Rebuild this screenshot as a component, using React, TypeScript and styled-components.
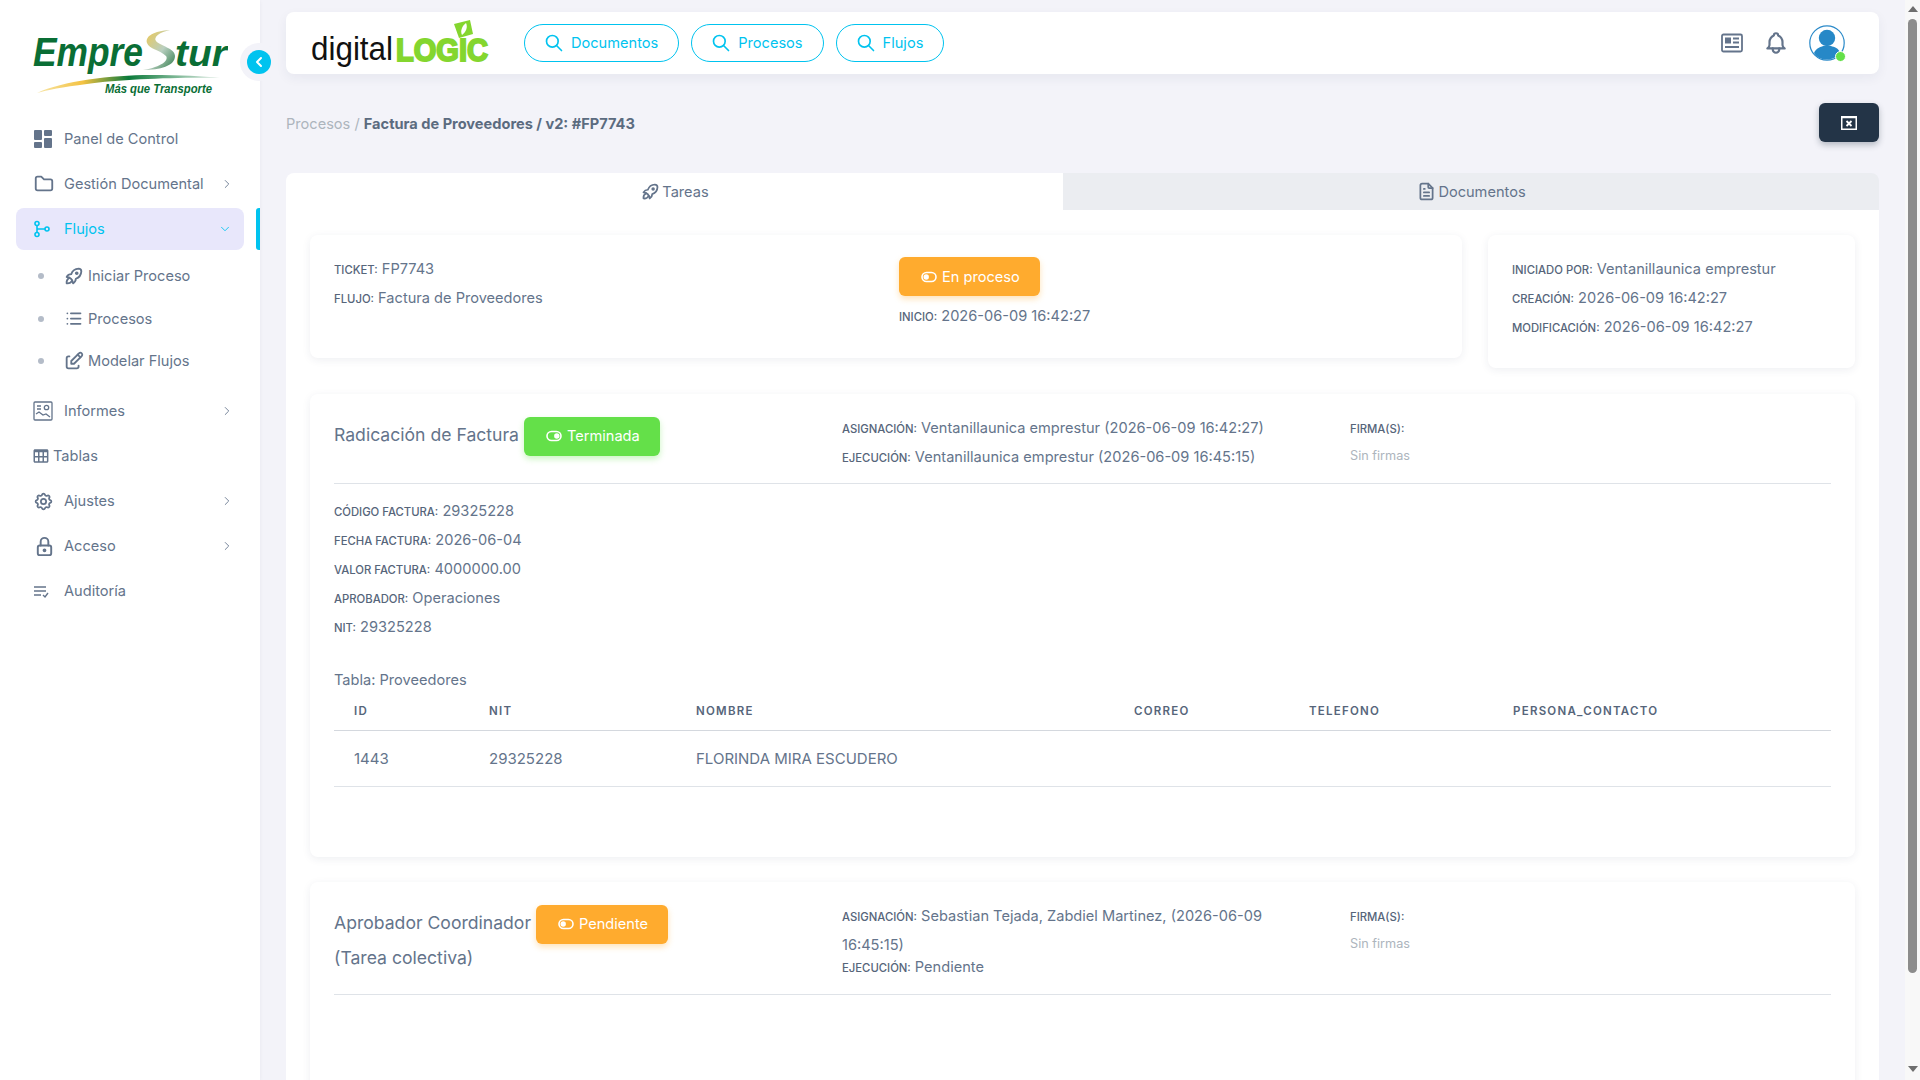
import React from "react";
import styled, { createGlobalStyle } from "styled-components";
import { ChevronLeft, ChevronRight, ChevronDown } from "lucide-react";
import { TbRocket, TbLock, TbSettings, TbFolder, TbList, TbEdit, TbSearch, TbBell, TbFileText } from "react-icons/tb";
import { BiTable } from "react-icons/bi";

const GlobalStyle = createGlobalStyle`
  html, body { margin: 0; padding: 0; height: 1080px; overflow: hidden; background: #f3f3f9; }
  body { font-family: Inter, "Noto Sans", sans-serif; color: #64748b; }
  * { box-sizing: border-box; }
`;

const Page = styled.div`display: flex; width: 1920px; height: 1080px; overflow: hidden;`;

const Sidebar = styled.aside`
  position: relative; flex: 0 0 260px; background: #fff; height: 1080px; padding: 0 16px;
  box-shadow: 0 1px 4px rgba(20, 30, 60, .05);
`;
const LogoWrap = styled.div`height: 116px; padding-top: 26px; padding-left: 16px;`;
const CollapseHalo = styled.div`
  position: absolute; left: 240px; top: 43px; width: 38px; height: 38px; border-radius: 50%;
  background: #f3f3f9; display: flex; align-items: center; justify-content: center;
`;
const CollapseBtn = styled.div`
  width: 24px; height: 24px; border-radius: 50%; background: #00c3ef; color: #fff;
  display: flex; align-items: center; justify-content: center;
`;
const NavRow = styled.div<{ $active?: boolean; $h?: number }>`
  position: relative; display: flex; align-items: center; height: ${p => p.$h ?? 45}px; padding: 0 ${p => (p.$active ? 12 : 10)}px 0 18px;
  font-size: 14.6px; line-height: 20px; color: ${p => (p.$active ? "#00c3ef" : "#64748b")};
  background: ${p => (p.$active ? "#e8e7fb" : "transparent")}; border-radius: 8px;
`;
const NavIconBox = styled.span`width: 30px; flex: 0 0 30px; display: flex; align-items: center; margin-left: -1px; margin-right: 1px; color: #64748b;`;
const TableIconBox = styled.span`display: flex; align-items: center; margin: 0 3px 0 -2px; color: #64748b;`;
const NavLabel = styled.span`flex: 1;`;
const ActiveMark = styled.span`
  position: absolute; right: -16px; top: 0; width: 4px; height: 42px; background: #00c3ef;
  border-radius: 3px 0 0 3px;
`;
const SubRow = styled.div`
  display: flex; align-items: center; height: 42.5px; padding-left: 22px; font-size: 14.6px; color: #64748b;
`;
const Dot = styled.span`width: 6px; height: 6px; border-radius: 50%; background: #b4bcc8; margin-right: 19px;`;
const SubIcon = styled.span`display: flex; width: 25px; flex: 0 0 25px;`;
const Spacer = styled.div<{ $h: number }>`height: ${p => p.$h}px;`;

const Main = styled.main`flex: 1; min-width: 0; padding: 12px 26px 0 26px; height: 1080px; overflow: hidden;`;
const Topbar = styled.header`
  display: flex; align-items: center; height: 62px; background: #fff; border-radius: 8px; padding: 0 24px;
  box-shadow: 0 4px 12px rgba(40, 50, 90, .06);
`;
const PillGroup = styled.div`display: flex; gap: 12px; margin-left: 34px;`;
const Pill = styled.div`
  display: flex; align-items: center; gap: 7px; height: 38px; padding: 0 20px 0 19px; border: 1px solid #00c3ef;
  border-radius: 19px; color: #00c3ef; font-size: 14.6px;
`;
const TopRight = styled.div`margin-left: auto; display: flex; align-items: center; gap: 20px; padding-right: 10px;`;
const AvatarWrap = styled.div`position: relative; width: 36px; height: 36px;`;
const OnlineDot = styled.span`
  position: absolute; right: -1px; bottom: -1px; width: 11px; height: 11px; border-radius: 50%;
  background: #64e049; border: 1.5px solid #fff;
`;

const CrumbBar = styled.div`display: flex; align-items: center; justify-content: space-between; height: 39px; margin-top: 29px;`;
const Crumb = styled.div`font-size: 14.6px; color: #adb5bd; font-weight: 400; padding-top: 2px;`;
const CrumbStrong = styled.span`font-weight: 700; color: #5b6b80;`;
const DarkBtn = styled.div`
  width: 60px; height: 39px; border-radius: 6px; background: #233447; color: #fff;
  display: flex; align-items: center; justify-content: center; box-shadow: 0 3px 6px rgba(35, 52, 71, .3);
`;

const Tabs = styled.div`display: flex; margin-top: 31px; height: 37px; border-radius: 8px 8px 0 0; overflow: hidden;`;
const Tab = styled.div<{ $active?: boolean }>`
  flex: ${p => (p.$active ? "0 0 777px" : "1")}; display: flex; align-items: center; justify-content: center; gap: 1px;
  font-size: 14.6px; color: #64748b; background: ${p => (p.$active ? "#fff" : "#ebedf1")};
`;
const Panel = styled.section`background: #fff; padding: 25px 24px 0; height: 900px;`;
const TopCards = styled.div`display: flex; gap: 26px; align-items: flex-start;`;
const Card = styled.div<{ $w?: string; $h: number; $mt?: number }>`
  flex: ${p => p.$w ?? "1"}; height: ${p => p.$h}px; background: #fff; border-radius: 8px; padding: 20px 24px;
  margin-top: ${p => p.$mt ?? 0}px; box-shadow: 0 2px 8px rgba(40, 50, 90, .08);
`;
const InfoSplit = styled.div`display: flex;`;
const InfoCol = styled.div<{ $w?: number }>`flex: ${p => (p.$w ? `0 0 ${p.$w}px` : "1")}; min-width: 0;`;
const StatusCol = styled(InfoCol)`padding-top: 2px;`;
const Line = styled.div<{ $lh?: number }>`font-size: 14.6px; line-height: ${p => p.$lh ?? 29}px; color: #64748b; white-space: nowrap;`;
const StatusLine = styled(Line)`margin-top: 6px;`;
const WrapLine = styled(Line)`white-space: normal; width: 430px;`;
const Key = styled.span`font-size: 11.3px; line-height: 1; font-weight: 500; text-transform: uppercase; color: #56657a;`;

const Badge = styled.div<{ $c: string }>`
  display: inline-flex; align-items: center; gap: 5px; height: 39px; padding: 0 20px 0 22px; border-radius: 6px;
  font-size: 14.6px; line-height: 20px; color: #fff; background: ${p => p.$c}; box-shadow: 0 3px 6px ${p => p.$c}55;
`;
const TitleBadge = styled(Badge)`vertical-align: middle; margin: -3px 0;`;
const TaskHead = styled.div<{ $h: number }>`display: flex; height: ${p => p.$h}px; border-bottom: 1px solid #dfe3e8;`;
const TaskTitle = styled.div`flex: 0 0 508px; font-size: 17.6px; line-height: 34px; color: #64748b; padding-top: 4px;`;
const TaskCol = styled.div`flex: 0 0 508px;`;
const SignCol = styled.div`flex: 1;`;
const Faint = styled.div`font-size: 12.7px; line-height: 25px; color: #adb5bd;`;
const Fields = styled.div`padding-top: 13px;`;
const TableName = styled.div`font-size: 14.6px; line-height: 22px; margin-top: 27px; color: #64748b;`;
const DataTable = styled.div`display: grid; grid-template-columns: 135px 207px 438px 175px 204px 1fr;`;
const Th = styled.div`
  font-size: 11.5px; font-weight: 600; letter-spacing: 1.25px; color: #56657a; padding: 0 20px; height: 40px;
  display: flex; align-items: center; border-bottom: 1.5px solid #d4d8de;
`;
const Td = styled.div`
  font-size: 15px; color: #64748b; padding: 0 20px; height: 56px; display: flex; align-items: center;
  border-bottom: 1px solid #dfe3e8;
`;

const Scrollbar = styled.div`
  flex: 0 0 15px; height: 1080px; background: #f8f8f8; display: flex; flex-direction: column; align-items: center;
  padding-top: 6px;
`;
const ArrowUp = styled.span`width: 0; height: 0; border: 5px solid transparent; border-top: 0; border-bottom: 6px solid #6e6e6e;`;
const ArrowDown = styled.span`width: 0; height: 0; border: 5px solid transparent; border-bottom: 0; border-top: 6px solid #6e6e6e; margin-top: 93px;`;
const Thumb = styled.div`width: 9px; height: 954px; border-radius: 5px; background: #8c8c8c; margin-top: 7px;`;

const Logo = () => (
  <svg width="196" height="72" viewBox="0 0 196 72">
    <defs>
      <linearGradient id="sw" x1="0" x2="1"><stop offset="0" stopColor="#f7e6a8" /><stop offset=".25" stopColor="#f4c242" /><stop offset=".5" stopColor="#0b7a3a" /><stop offset="1" stopColor="#e6efe9" /></linearGradient>
      <linearGradient id="sw2" x1="0" x2="1" y1="0" y2="1"><stop offset="0" stopColor="#f2c84b" /><stop offset=".55" stopColor="#b9cfc0" /><stop offset="1" stopColor="#2c7a48" /></linearGradient>
    </defs>
    <text x="1" y="40" fontFamily="Liberation Sans" fontStyle="italic" fontWeight="700" fontSize="40" fill="#0a6e35" textLength="110" lengthAdjust="spacingAndGlyphs">Empre</text>
    <text x="143" y="40" fontFamily="Liberation Sans" fontStyle="italic" fontWeight="700" fontSize="36" fill="#0a6e35" textLength="52" lengthAdjust="spacingAndGlyphs">tur</text>
    <path d="M138 4 C122 5 113 10 115 17 C117 23 128 24 134 30 C137 34 130 41 111 44 C128 44 143 40 143 30 C143 22 128 20 124 15 C121 11 128 6 138 4Z" fill="url(#sw2)" />
    <path d="M5 67 C30 55 80 49 118 49 C150 49 170 50 188 52 C150 51 90 53 55 58 C30 61 15 64 5 67Z" fill="url(#sw)" />
    <text x="73" y="67" fontFamily="Liberation Sans" fontStyle="italic" fontWeight="700" fontSize="12.5" fill="#0a6e35" textLength="107" lengthAdjust="spacingAndGlyphs">Más que Transporte</text>
  </svg>
);

const DigitalLogic = () => (
  <svg width="180" height="56" viewBox="0 0 180 56">
    <text x="1" y="45" fontFamily="Liberation Sans" fontSize="33" fill="#111" textLength="82" lengthAdjust="spacingAndGlyphs">digital</text>
    <text x="86" y="45.5" fontFamily="Liberation Sans" fontWeight="700" fontSize="31" fill="#84d62f" textLength="92" lengthAdjust="spacingAndGlyphs" stroke="#84d62f" strokeWidth="2">LOGIC</text>
    <path d="M144 9 L160 5 L163 19 L149 23Z" fill="#84d62f" />
    <path d="M152 20 C150 16 152 11 156 8 C158 12 156 17 152 20Z" fill="#fff" />
  </svg>
);

const Dash = () => (
  <svg width="20" height="20" viewBox="0 0 20 20" fill="#64748b"><rect x="1" y="1" width="8" height="10" rx="1"/><rect x="11" y="1" width="8" height="6" rx="1"/><rect x="1" y="13" width="8" height="6" rx="1"/><rect x="11" y="9" width="8" height="10" rx="1"/></svg>
);
const BranchIcon = () => (
  <svg width="18" height="18" viewBox="0 0 18 18" fill="none" stroke="#00c3ef" strokeWidth="1.6"><circle cx="4" cy="3.5" r="2"/><circle cx="4" cy="14.5" r="2"/><circle cx="14" cy="9" r="2"/><path d="M4 5.5V12.5M4 9H12"/></svg>
);
const ReportIcon = () => (
  <svg width="20" height="20" viewBox="0 0 20 20" fill="none" stroke="#64748b" strokeWidth="1.3"><rect x="1" y="1" width="18" height="18" rx="1"/><path d="M4 5h4M4 8h4"/><circle cx="13.5" cy="6.5" r="2.2"/><path d="M3 13l3-2 4 3 3-1 4 3"/></svg>
);
const Audit = () => (
  <svg width="16" height="16" viewBox="0 0 16 16" fill="none" stroke="#64748b" strokeWidth="1.4"><path d="M1 4h12M1 8h12M1 12h7M10 12l2 2 3-4"/></svg>
);
const News = () => (
  <svg width="22" height="20" viewBox="0 0 22 20" fill="none" stroke="#64748b" strokeWidth="1.8"><rect x="1" y="1.5" width="20" height="17" rx="1.5"/><rect x="4" y="4.5" width="6" height="6" fill="#64748b" stroke="none"/><path d="M12 5.5h6M12 9.5h6M4 14h14"/></svg>
);
const Avatar = () => (
  <svg width="36" height="36" viewBox="0 0 36 36"><circle cx="18" cy="18" r="17.2" fill="#fff" stroke="#2b8ac9" strokeWidth="1.2"/><circle cx="18" cy="13" r="8.2" fill="#2688c7"/><path d="M5 28 C7 23 12 22 14 21 H22 C25 22 30 23 31 28 C27 33 22 34.5 18 34.5 C13 34.5 8 33 5 28Z" fill="#2688c7"/></svg>
);
const CloseWin = () => (
  <svg width="16" height="14" viewBox="0 0 16 14" fill="none" stroke="#fff"><rect x=".75" y=".75" width="14.5" height="12.5" strokeWidth="1.5"/><path d="M5.5 5l5 5M10.5 5l-5 5" strokeWidth="1.8"/><path d="M1 1.5h14" strokeWidth="1.5"/></svg>
);
const StatusToggle = ({ on }: { on?: boolean }) => (
  <svg width="16" height="12" viewBox="0 0 16 12" fill="none"><rect x="1" y="1.5" width="14" height="9" rx="4.5" stroke="#fff" strokeWidth="1.6"/><circle cx={on ? 10.8 : 5.2} cy="6" r="2.7" fill="#fff"/></svg>
);

export default function App() {
  const c = "#64748b";
  return (
    <Page>
      <GlobalStyle />
      <Sidebar>
        <LogoWrap><Logo /></LogoWrap>
        <CollapseHalo><CollapseBtn><ChevronLeft size={16} strokeWidth={3} /></CollapseBtn></CollapseHalo>
        <NavRow><NavIconBox><Dash /></NavIconBox><NavLabel>Panel de Control</NavLabel></NavRow>
        <NavRow><NavIconBox><TbFolder size={22} /></NavIconBox><NavLabel>Gestión Documental</NavLabel><ChevronRight size={14} color={c} strokeWidth={1.5} /></NavRow>
        <Spacer $h={2} />
        <NavRow $active $h={42}><NavIconBox><BranchIcon /></NavIconBox><NavLabel>Flujos</NavLabel><ChevronDown size={14} color="#00c3ef" strokeWidth={1.5} /><ActiveMark /></NavRow>
        <Spacer $h={5} />
        <SubRow><Dot /><SubIcon><TbRocket size={22} color={c} /></SubIcon>Iniciar Proceso</SubRow>
        <SubRow><Dot /><SubIcon><TbList size={21} color={c} /></SubIcon>Procesos</SubRow>
        <SubRow><Dot /><SubIcon><TbEdit size={22} color={c} /></SubIcon>Modelar Flujos</SubRow>
        <Spacer $h={6} />
        <NavRow><NavIconBox><ReportIcon /></NavIconBox><NavLabel>Informes</NavLabel><ChevronRight size={14} color={c} strokeWidth={1.5} /></NavRow>
        <NavRow><TableIconBox><BiTable size={18} /></TableIconBox><NavLabel>Tablas</NavLabel></NavRow>
        <NavRow><NavIconBox><TbSettings size={21} /></NavIconBox><NavLabel>Ajustes</NavLabel><ChevronRight size={14} color={c} strokeWidth={1.5} /></NavRow>
        <NavRow><NavIconBox><TbLock size={23} /></NavIconBox><NavLabel>Acceso</NavLabel><ChevronRight size={14} color={c} strokeWidth={1.5} /></NavRow>
        <NavRow $h={44}><NavIconBox><Audit /></NavIconBox><NavLabel>Auditoría</NavLabel></NavRow>
      </Sidebar>
      <Main>
        <Topbar>
          <DigitalLogic />
          <PillGroup>
            <Pill><TbSearch size={20} />Documentos</Pill>
            <Pill><TbSearch size={20} />Procesos</Pill>
            <Pill><TbSearch size={20} />Flujos</Pill>
          </PillGroup>
          <TopRight>
            <News />
            <TbBell size={26} color={c} />
            <AvatarWrap><Avatar /><OnlineDot /></AvatarWrap>
          </TopRight>
        </Topbar>
        <CrumbBar>
          <Crumb>Procesos / <CrumbStrong>Factura de Proveedores / v2: #FP7743</CrumbStrong></Crumb>
          <DarkBtn><CloseWin /></DarkBtn>
        </CrumbBar>
        <Tabs>
          <Tab $active><TbRocket size={21} />Tareas</Tab>
          <Tab><TbFileText size={21} />Documentos</Tab>
        </Tabs>
        <Panel>
          <TopCards>
            <Card $h={123}>
              <InfoSplit>
                <InfoCol $w={565}>
                  <Line><Key>Ticket:</Key> FP7743</Line>
                  <Line><Key>Flujo:</Key> Factura de Proveedores</Line>
                </InfoCol>
                <StatusCol>
                  <Badge $c="#ffab2e"><StatusToggle />En proceso</Badge>
                  <StatusLine><Key>Inicio:</Key> 2026-06-09 16:42:27</StatusLine>
                </StatusCol>
              </InfoSplit>
            </Card>
            <Card $w="0 0 367px" $h={133}>
              <Line><Key>Iniciado por:</Key> Ventanillaunica emprestur</Line>
              <Line><Key>Creación:</Key> 2026-06-09 16:42:27</Line>
              <Line><Key>Modificación:</Key> 2026-06-09 16:42:27</Line>
            </Card>
          </TopCards>
          <Card $h={463} $mt={26}>
            <TaskHead $h={70}>
              <TaskTitle>Radicación de Factura <TitleBadge $c="#64e049"><StatusToggle on />Terminada</TitleBadge></TaskTitle>
              <TaskCol>
                <Line><Key>Asignación:</Key> Ventanillaunica emprestur (2026-06-09 16:42:27)</Line>
                <Line><Key>Ejecución:</Key> Ventanillaunica emprestur (2026-06-09 16:45:15)</Line>
              </TaskCol>
              <SignCol><Line><Key>Firma(s):</Key></Line><Faint>Sin firmas</Faint></SignCol>
            </TaskHead>
            <Fields>
              <Line><Key>Código factura:</Key> 29325228</Line>
              <Line><Key>Fecha factura:</Key> 2026-06-04</Line>
              <Line><Key>Valor factura:</Key> 4000000.00</Line>
              <Line><Key>Aprobador:</Key> Operaciones</Line>
              <Line><Key>Nit:</Key> 29325228</Line>
            </Fields>
            <TableName>Tabla: Proveedores</TableName>
            <DataTable>
              <Th>ID</Th><Th>NIT</Th><Th>NOMBRE</Th><Th>CORREO</Th><Th>TELEFONO</Th><Th>PERSONA_CONTACTO</Th>
              <Td>1443</Td><Td>29325228</Td><Td>FLORINDA MIRA ESCUDERO</Td><Td /><Td /><Td />
            </DataTable>
          </Card>
          <Card $h={300} $mt={25}>
            <TaskHead $h={93}>
              <TaskTitle>Aprobador Coordinador <TitleBadge $c="#ffab2e"><StatusToggle />Pendiente</TitleBadge><br />(Tarea colectiva)</TaskTitle>
              <TaskCol>
                <WrapLine><Key>Asignación:</Key> Sebastian Tejada, Zabdiel Martinez, (2026-06-09 16:45:15)</WrapLine>
                <Line $lh={15}><Key>Ejecución:</Key> Pendiente</Line>
              </TaskCol>
              <SignCol><Line><Key>Firma(s):</Key></Line><Faint>Sin firmas</Faint></SignCol>
            </TaskHead>
          </Card>
        </Panel>
      </Main>
      <Scrollbar><ArrowUp /><Thumb /><ArrowDown /></Scrollbar>
    </Page>
  );
}
